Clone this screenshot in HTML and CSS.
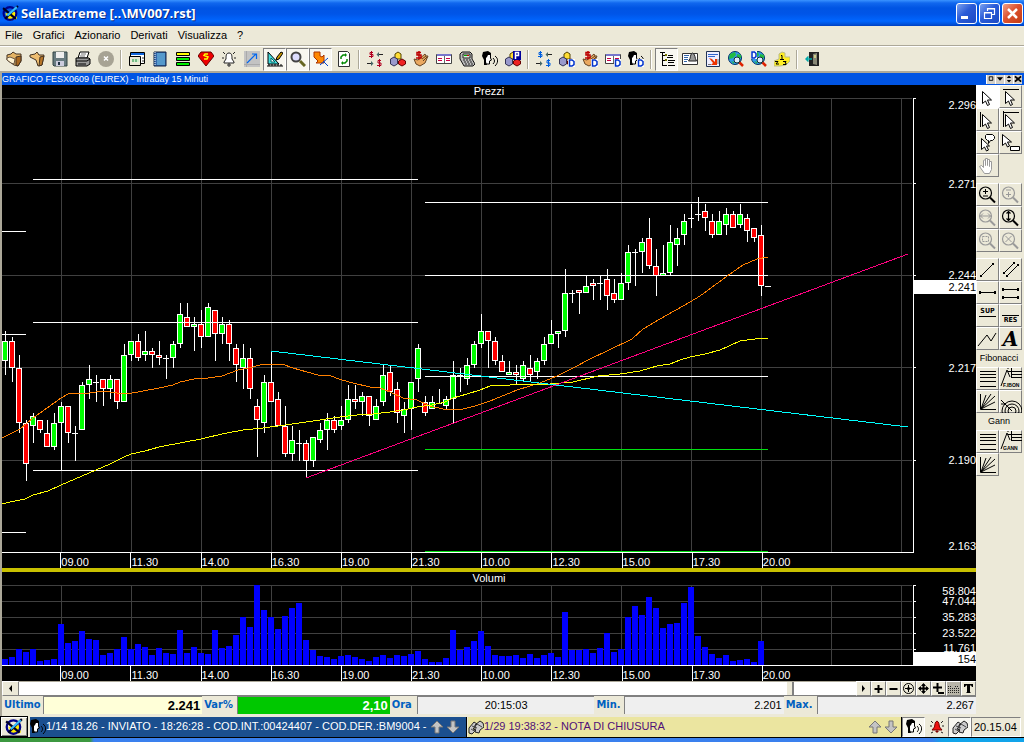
FILE: index.html
```html
<!DOCTYPE html>
<html lang="it">
<head>
<meta charset="utf-8">
<title>SellaExtreme</title>
<link rel="stylesheet" href="styles.css">
</head>
<body>
<svg class="sprite" aria-hidden="true">
  <symbol id="logo" viewBox="0 0 16 16"><path d="M3 8l4 7 7-2V6z" fill="#fe0"/><circle cx="7.500" cy="8" r="6" fill="none" stroke="#008" stroke-width="2"/><path d="M1 3l12 10M3 13L15 1" stroke="#002" stroke-width="2"/><path d="M5 10l9-8" stroke="#3bf" stroke-width="2"/></symbol>
  <symbol id="box-open" viewBox="0 0 16 16"><path d="M1 4l4-1 2-2 3 2 5 0v7l-3 5-4-1-7-5z" fill="#e3b364" stroke="#432"/><path d="M10 6l5-1v5l-3 5-2-1z" fill="#a86820" stroke="#432"/><path d="M1 7l3-1 5 2-1 5-3-1-4-3z" fill="#fff3d0" stroke="#654"/></symbol>
  <symbol id="box" viewBox="0 0 16 16"><path d="M1 4l5-1 2-2 2 3 5 0-2 10-4 1-2-6-6-3z" fill="#edbd70" stroke="#432"/><path d="M11 6l4-1-2 9-3 1z" fill="#b87628" stroke="#432"/></symbol>
  <symbol id="disk" viewBox="0 0 16 16"><path d="M1 1h14v14H2l-1-1z" fill="#687b80" stroke="#344"/><path d="M4 1h8v6H4z" fill="#eee"/><path d="M4 10h8v5H4z" fill="#ccd"/><path d="M6 11h2v3H6z" fill="#234"/></symbol>
  <symbol id="printer" viewBox="0 0 16 16"><path d="M5 1h9l-2 6H3z" fill="#fff" stroke="#000"/><path d="M6 3h5M5 5h5" stroke="#777"/><path d="M1 7h13l1 1v5l-3 2H1z" fill="#999" stroke="#000"/><path d="M1 10h11l3-2M3 13h8" stroke="#000" fill="none"/></symbol>
  <symbol id="stop" viewBox="0 0 16 16"><circle cx="8" cy="8" r="8" fill="#a7a394"/><path d="M6 5.500l4 4M10 5.500l-4 4" stroke="#fff" stroke-width="1.500"/></symbol>
  <symbol id="window" viewBox="0 0 16 16"><path d="M1.500 1.500h14v11h-14z" fill="#fff" stroke="#000"/><path d="M2 2h13v2H2z" fill="#16d"/><path d="M.5 5.500h11v9H.5z" fill="#ece9d8" stroke="#000"/><path d="M3 8h7v3H3z" fill="#cec"/><path d="M4 8v3M7 8v3" stroke="#284"/><path d="M13 7h2M13 10h2" stroke="#333"/></symbol>
  <symbol id="book" viewBox="0 0 16 16"><path d="M2 1h12v14H2z" fill="#36a" stroke="#124"/><path d="M5 2h8v12H5z" fill="#59c"/><path d="M3 1v14" stroke="#fff" stroke-dasharray="1 1"/></symbol>
  <symbol id="bars" viewBox="0 0 16 16"><path d="M1.500 1.500h13v3h-13z" fill="#ff0" stroke="#000"/><path d="M1.500 6.500h13v3h-13zM1.500 11.500h13v3h-13z" fill="#0e0" stroke="#000"/></symbol>
  <symbol id="gem" viewBox="0 0 16 16"><path d="M3 1h10l3 4-8 10L0 5z" fill="#e00" stroke="#600"/><path d="M10 3H7L6 4.500 10 6 9 8H6" fill="none" stroke="#ff0" stroke-width="1.500"/></symbol>
  <symbol id="bell" viewBox="0 0 16 16"><path d="M8 2c-3 0-3 3-3 6l-2 3v1h10v-1l-2-3c0-3 0-6-3-6zM7 13h2v2H7z" fill="#fff" stroke="#222"/><path d="M2 1l2 2M14 1l-2 2M1 7h2M13 7h2" stroke="#222"/></symbol>
  <symbol id="trend" viewBox="0 0 16 16"><path d="M0 0h16v16H0z" fill="#c3c3c3"/><path d="M2.500 0v16M0 13.500h16" stroke="#aaa"/><path d="M3 12l9-9M8 3h4.500v5" fill="none" stroke="#06e" stroke-width="1.200"/></symbol>
  <symbol id="square" viewBox="0 0 16 16"><path d="M1 1v12h11z" fill="#4dd" stroke="#000"/><path d="M4 7v4h4z" fill="#fff" stroke="#066"/><path d="M9 9l1-3 4-5 2 1-4 6z" fill="#c90" stroke="#000"/><path d="M0 15h16M2 13v2M5 13v2M8 13v2M11 13v2M14 13v2" stroke="#000"/></symbol>
  <symbol id="lens" viewBox="0 0 16 16"><circle cx="6" cy="6" r="4.500" fill="#ddf" stroke="#444" stroke-width="2"/><path d="M10 10l5 5" stroke="#662" stroke-width="3"/></symbol>
  <symbol id="pin-arrow" viewBox="0 0 16 16"><path d="M1 1h6v4l2 1 2-2v8H3l2-2-4-4z" fill="#f80" stroke="#a30"/><path d="M7 14l8-7M10 10l5 5" stroke="#04c"/></symbol>
  <symbol id="refresh" viewBox="0 0 16 16"><path d="M2.500.5h9l2 2v13h-11z" fill="#fff" stroke="#333"/><path d="M5 8V6l2-2h2M11 8v2l-2 2H7" fill="none" stroke="#080" stroke-width="1.500"/><path d="M9 2l2 2-2 2zM7 10l-2 2 2 2z" fill="#080"/></symbol>
  <symbol id="dollars" viewBox="0 0 16 16"><path d="M6 1.500H3v2h3v2H2M4.500 0v7M14 9.500h-3v2.500h3v2.500h-4M12.500 8v8" fill="none" stroke="currentColor"/><path d="M16 3.500h-5M0 12.500h5" stroke="#222"/><path d="M12 1v5L9.500 3.500zM4 10v5l2.500-2.500z" fill="#466"/></symbol>
  <symbol id="blocks" viewBox="0 0 16 16"><path d="M5 3l3-2 3 2v5H5z" fill="#fd3" stroke="#540"/><path d="M.5 8L4 6l3.500 2v5L4 15l-3.500-2z" fill="#99c" stroke="#335"/><path d="M8.500 10L12 8l3.500 2v3L12 15l-3.500-2z" fill="#e22" stroke="#600"/></symbol>
  <symbol id="hand-money" viewBox="0 0 16 16"><path d="M1 8l4 1 7-6 1 2 2 0-3 7-5 3-4-2z" fill="#eaa961" stroke="#642"/><path d="M9 8l4-3M10 10l4-4" stroke="#642"/><path d="M8 1.500H4v2.500h4V7H3M6 0v8.500" fill="none" stroke="#b00" stroke-width="1.500"/></symbol>
  <symbol id="ticket" viewBox="0 0 16 16"><path d="M.5 3.500h15v9H.5z" fill="#fff" stroke="#444"/><path d="M1 3h14v2H1z" fill="#77c"/><path d="M8.500 5v7" stroke="#666"/><path d="M2 7.500h4M2 9.500h4M10 7.500h4M10 9.500h4" stroke="#c04"/></symbol>
  <symbol id="calc" viewBox="0 0 16 16"><path d="M3 1h8l2 2 0 5 3 5-2 2H5L1 8V3z" fill="#bbb" stroke="#111"/><path d="M4 3h7v4H4z" fill="#ded" stroke="#222"/><path d="M5 4.500h3" stroke="#0a0"/><path d="M8 4.500h2" stroke="#c00"/><path d="M4 9h8M5 11h8M6 13h8" stroke="#222" stroke-dasharray="2 1"/></symbol>
  <symbol id="voice" viewBox="0 0 16 16"><path d="M4 3l3 0 2 3-1 2 1 1-2 1v3H3l1-4z" fill="#fff"/><path d="M1 1l5-1 3 2v2H6L5 6 4 7v4l1 3H2V9L0 5z"/><path d="M8.500 4v3l1 2-2 1v3H4" fill="none" stroke="#000"/><path d="M11 7c2 2 2 4 0 6M13 5c4 3 3 7 0 10" fill="none" stroke="currentColor"/></symbol>
  <symbol id="badge-d" viewBox="0 0 16 16"><path d="M9 8h7v8H9z" fill="#fff"/><path d="M10.500 9h2.500l2 1.500v3L13 15h-2.500z" fill="none" stroke="#03c" stroke-width="1.500"/></symbol>
  <symbol id="badge-p" viewBox="0 0 16 16"><path d="M8 0h8v9H8z" fill="#009"/><path d="M10.500 8V1.500h3v3h-3" fill="none" stroke="#fff" stroke-width="1.500"/></symbol>
  <symbol id="tree" viewBox="0 0 16 16"><path d="M1 1.500h5M3.500 2v13M4 4.500h4M4 9.500h4M4 14.500h4M9 4.500h5M9 9.500h7M9 14.500h7M8 6.500h6M9 11.500h6" fill="none" stroke="#000"/><path d="M6 3h2v2H6zM6 8h2v2H6z" fill="#770"/></symbol>
  <symbol id="doc-bell" viewBox="0 0 16 16"><path d="M.5 2.500h15v11H.5z" fill="#fff" stroke="#333"/><path d="M2 4.500h5M2 6.500h4M2 8.500h4M2 10.500h3" stroke="#36a"/><path d="M10.500 2c-3 1-1 5-4 8h8c-2-3-1-7-4-8z" fill="#999" stroke="#222"/></symbol>
  <symbol id="report" viewBox="0 0 16 16"><path d="M1.500.5h13v15h-13z" fill="#eef" stroke="#235"/><path d="M3 3.500h10M3 5.500h7" stroke="#36c"/><path d="M4 7l3 1 3 3v-3h2v6H6l2-2z" fill="#e30"/><path d="M3 13.500h3M13 8v5" stroke="#777"/></symbol>
  <symbol id="globe" viewBox="0 0 16 16"><circle cx="7" cy="7" r="6.500" fill="#39e" stroke="#036"/><path d="M2 3l5-2 1 3-3 3-4 1zM9 3l4 1v3H9zM3 10l3 1v2z" fill="#2b4"/><circle cx="9" cy="9" r="3" fill="#def" stroke="#133"/><path d="M11.500 11.500l3.500 3.500" stroke="#d20" stroke-width="2.500"/></symbol>
  <symbol id="podium" viewBox="0 0 16 16"><path d="M5 3l3-2 3 1v4h5v4l-4 4-6 1H0v-5l5-2z" fill="#fe2" stroke="#bb8"/><path d="M7 4.500h1V8M6 8.500h4M1 10.500h3L2 13h3M9 10.500h3l-1 1.500h1v1.500H9" fill="none" stroke="#000"/></symbol>
  <symbol id="exit" viewBox="0 0 16 16"><path d="M4 1h10v14H4z" fill="#222"/><path d="M8 3l4-1v12l-4-1z" fill="#887"/><path d="M9 4h2v3H9z" fill="#cc8"/><path d="M7 8H1M3.500 5.500L1 8l2.500 2.500" fill="none" stroke="#0aa" stroke-width="1.500"/></symbol>
  <symbol id="phone" viewBox="0 0 16 16"><path d="M1 9l5-6 3 2-4 5 3 1-4 4-3-1zM7 6l5-4 3 2 1 4-4 3-1 3-4-1z" fill="#ccc" stroke="#222"/><path d="M4 7l5 2M3 10l5 3M9 5l5 3" stroke="#444"/></symbol>
  <symbol id="bell-red" viewBox="0 0 16 16"><path d="M8 2C6 3 6 5 5.500 8L3 11h10l-2.500-3C10 5 10 3 8 2zM7 12h2v1H7z" fill="#e11" stroke="#700"/><path d="M2 2l2 2M14 2l-2 2M1 7h2M13 7h2M2 14l2-1M14 14l-2-1" stroke="#222"/></symbol>
  <symbol id="up" viewBox="0 0 14 14"><path d="M7 1l6 6H9v6H5V7H1z" fill="#c4c4c4" stroke="#777"/></symbol>
  <symbol id="down" viewBox="0 0 14 14"><path d="M7 13l6-6H9V1H5v6H1z" fill="#c4c4c4" stroke="#777"/></symbol>
  <symbol id="cursor" viewBox="0 0 22 22"><path d="M5.500 5.500v12l3-2.500 2 4.500 2-1-2-4.500h4z" fill="#fff" stroke="#000"/></symbol>
  <symbol id="mag" viewBox="0 0 22 22"><circle cx="8.500" cy="9" r="6" fill="none" stroke="currentColor" stroke-width="1.200"/><path d="M13 13.500l5 5" stroke="currentColor" stroke-width="2"/></symbol>
  <symbol id="levels" viewBox="0 0 22 22"><path d="M3 3.500h16M3 6.500h16M3 9.500h16M3 13.500h16M3 18.500h16" stroke="#000"/></symbol>
  <symbol id="ext" viewBox="0 0 22 22"><path d="M1 18L7 2l3 7M11.500 0v9M8 3.500h14M11 6.500h11M11 9.500h11M7 0h2" fill="none" stroke="#000"/></symbol>
  <symbol id="fan" viewBox="0 0 22 22"><path d="M3.500 3v15.500H19M4 18L9 4M4 18L14 3M4 18L18 5M4 18l14-7" fill="none" stroke="#000"/></symbol>
</svg>

<header class="titlebar">
  <svg class="ico"><use href="#logo"/></svg>
  <h1 class="title">SellaExtreme [..\MV007.rst]</h1>
  <button class="win" aria-label="Riduci"><svg viewBox="0 0 19 19"><path d="M4 12h7v3H4z" fill="#fff"/></svg></button>
  <button class="win" aria-label="Ripristina"><svg viewBox="0 0 19 19"><path d="M7.500 7V4.500h7v6H12M7 5h8M4.500 8.500h7v6h-7zM4 9h8" fill="none" stroke="#fff" stroke-width="1.200"/></svg></button>
  <button class="win close" aria-label="Chiudi"><svg viewBox="0 0 19 19"><path d="M5 5l9 9M14 5l-9 9" stroke="#fff" stroke-width="2.500"/></svg></button>
</header>

<nav class="menu">
  <button>File</button><button>Grafici</button><button>Azionario</button><button>Derivati</button><button>Visualizza</button><button>?</button>
</nav>

<div class="toolbar" role="toolbar">
  <button aria-label="Apri pagina"><svg><use href="#box-open"/></svg></button>
  <button aria-label="Apri"><svg><use href="#box"/></svg></button>
  <button aria-label="Salva"><svg><use href="#disk"/></svg></button>
  <button aria-label="Stampa"><svg><use href="#printer"/></svg></button>
  <button aria-label="Annulla"><svg><use href="#stop"/></svg></button>
  <span class="sep"></span>
  <button aria-label="Finestre"><svg><use href="#window"/></svg></button>
  <button aria-label="Rubrica"><svg><use href="#book"/></svg></button>
  <button aria-label="Liste"><svg><use href="#bars"/></svg></button>
  <button aria-label="Super"><svg><use href="#gem"/></svg></button>
  <button aria-label="Allarmi"><svg><use href="#bell"/></svg></button>
  <button aria-label="Grafico"><svg><use href="#trend"/></svg></button>
  <button class="on" aria-label="Disegno"><svg><use href="#square"/></svg></button>
  <button class="on" aria-label="Zoom"><svg><use href="#lens"/></svg></button>
  <button class="on" aria-label="Puntatore"><svg><use href="#pin-arrow"/></svg></button>
  <button aria-label="Aggiorna"><svg><use href="#refresh"/></svg></button>
  <span class="sep"></span>
  <button class="red" aria-label="Compra vendi"><svg><use href="#dollars"/></svg></button>
  <button aria-label="Portafoglio"><svg><use href="#blocks"/></svg></button>
  <button aria-label="Liquidità"><svg><use href="#hand-money"/></svg></button>
  <button aria-label="Ordini"><svg><use href="#ticket"/></svg></button>
  <button aria-label="Calcolatrice"><svg><use href="#calc"/></svg></button>
  <button aria-label="Messaggi"><svg><use href="#voice"/></svg></button>
  <button aria-label="Posizioni"><svg><use href="#blocks"/><use href="#badge-p"/></svg></button>
  <span class="sep"></span>
  <button class="blue" aria-label="Compra vendi derivati"><svg><use href="#dollars"/></svg></button>
  <button aria-label="Portafoglio derivati"><svg><use href="#blocks"/><use href="#badge-d"/></svg></button>
  <button aria-label="Liquidità derivati"><svg><use href="#hand-money"/><use href="#badge-d"/></svg></button>
  <button aria-label="Ordini derivati"><svg><use href="#ticket"/><use href="#badge-d"/></svg></button>
  <button aria-label="Messaggi derivati"><svg><use href="#voice"/><use href="#badge-d"/></svg></button>
  <span class="sep"></span>
  <button class="on" aria-label="Albero"><svg><use href="#tree"/></svg></button>
  <button aria-label="Avvisi"><svg><use href="#doc-bell"/></svg></button>
  <button aria-label="Report"><svg><use href="#report"/></svg></button>
  <button aria-label="Cerca"><svg><use href="#globe"/></svg></button>
  <button aria-label="Cerca derivati"><svg><use href="#globe"/><path d="M0 0h6v8H0z" fill="#fff"/><path d="M1 1h2.500L5 2.500v3L3.500 7H1z" fill="none" stroke="#03c" stroke-width="1.500"/></svg></button>
  <button aria-label="Classifiche"><svg><use href="#podium"/></svg></button>
  <span class="sep"></span>
  <button aria-label="Esci"><svg><use href="#exit"/></svg></button>
</div>

<div class="mdi">
  <div class="caption">
    <h2 class="caption-text">GRAFICO FESX0609 (EUREX) - Intraday 15 Minuti</h2>
    <button aria-label="Finestra"><svg viewBox="0 0 9 8"><path d="M2.500 1.500h4v4h-4z" fill="none" stroke="#000"/></svg></button>
    <button aria-label="Menu"><svg viewBox="0 0 9 8"><path d="M1 2h7L4.500 6z"/></svg></button>
    <button aria-label="Dimensione"><svg viewBox="0 0 9 8"><path d="M2 3l2.500-3L7 3zM2 5l2.500 3L7 5z"/></svg></button>
    <button aria-label="Chiudi grafico"><svg viewBox="0 0 9 8"><path d="M1 1l7 6M8 1L1 7" stroke="#000" stroke-width="2"/></svg></button>
  </div>

  <div class="work">
    <main class="charts">
      <section class="pane price">
        <h3 class="pane-title">Prezzi</h3>
        <svg class="plot" id="price-plot" viewBox="2 98 912 455" preserveAspectRatio="none"></svg>
        <div class="scale" id="price-scale"></div>
        <div class="times"></div>
      </section>
      <section class="pane volume">
        <h3 class="pane-title">Volumi</h3>
        <svg class="plot" id="volume-plot" viewBox="2 585 912 81" preserveAspectRatio="none"></svg>
        <div class="scale" id="volume-scale"></div>
        <div class="times"></div>
      </section>
      <div class="scroll">
        <button aria-label="Indietro"><svg viewBox="0 0 11 11"><path d="M7 2v7L4 5.500z"/></svg></button>
        <div class="track"><span class="thumb"></span></div>
        <button aria-label="Avanti"><svg viewBox="0 0 11 11"><path d="M4 2v7l3-3.500z"/></svg></button>
        <button aria-label="Ingrandisci"><svg viewBox="0 0 11 11"><path d="M5.500 2v8M1.500 6h8" stroke="#000" stroke-width="2"/></svg></button>
        <button aria-label="Riduci scala"><svg viewBox="0 0 11 11"><path d="M1.500 6h8" stroke="#000" stroke-width="2"/></svg></button>
        <button aria-label="Centra"><svg viewBox="0 0 11 11"><circle cx="5.500" cy="5.500" r="5" fill="none" stroke="#000"/><path d="M5.500 2v7M2 5.500h7" stroke="#000"/><circle cx="5.500" cy="5.500" r="1.500"/></svg></button>
        <button aria-label="Sposta"><svg viewBox="0 0 11 11"><path d="M5.500 1v9M1 5.500h9" stroke="#000" stroke-width="2"/><path d="M5.500 0L8 3H3zM5.500 11L8 8H3zM0 5.500L3 3v5zM11 5.500L8 3v5z"/></svg></button>
        <button class="on" aria-label="Scala"><svg viewBox="0 0 11 11"><path d="M4.500 0v9M0 4.500h9" stroke="#000" stroke-width="2"/><path d="M5 10h6" stroke="#000" stroke-width="2"/></svg></button>
        <button class="grey" aria-label="Griglia"><svg viewBox="0 0 11 11"><path d="M0 5.500h11M0 7.500h11M0 9.500h11M0 3.500h4M7 3.500h4" stroke="#222" stroke-dasharray="1 1"/></svg></button>
        <button aria-label="Testo"><svg viewBox="0 0 11 11"><path d="M1 1h9v3H9L8 2.500H7V9l1 1H3l1-1V2.500H3L2 4H1z"/></svg></button>
      </div>
      <dl class="quote">
        <dt class="w41">Ultimo</dt><dd class="last">2.241</dd>
        <dt class="w35">Var%</dt><dd class="var">2,10</dd>
        <dt class="w27">Ora</dt><dd class="time">20:15:03</dd>
        <dt class="w30">Min.</dt><dd>2.201</dd>
        <dt class="w33">Max.</dt><dd>2.267</dd>
      </dl>
    </main>

    <aside class="palette">
      <div class="group">
        <button class="on" aria-label="Selezione"><svg><use href="#cursor"/></svg></button>
        <button aria-label="Cursore orizzontale"><svg><use href="#cursor"/><path d="M3 3.500h16" stroke="#000"/></svg></button>
        <button aria-label="Cursore verticale"><svg><use href="#cursor"/><path d="M3.500 3v15" stroke="#000"/></svg></button>
        <button aria-label="Cursore a croce"><svg><use href="#cursor"/><path d="M3 3.500h16M3.500 2v16" stroke="#000"/></svg></button>
        <button aria-label="Commento"><svg><path d="M9.500 2.500h6l2 2v2l-2 2h-2l-2 3v-3h-1l-2-2v-3z" fill="#fff" stroke="#000"/><path d="M4.500 6.500v11l3-2.500 2 4 2-1-2-4h3z" fill="#fff" stroke="#000"/></svg></button>
        <button aria-label="Etichetta"><svg viewBox="0 0 22 22"><path d="M2.500 2.500v11l3-2.500 2 4 2-1-2-4h4z" fill="#fff" stroke="#000"/><path d="M10.500 14.500h9v4h-9z" fill="#fff" stroke="#000"/></svg></button>
        <button aria-label="Mano"><svg viewBox="0 0 22 22"><path d="M7.500 18.500l-5-7 2-1 2 2V5.500l2-1v6-7h2v7-6h2v7l0-5h2v8l-2 4z" fill="#fff" stroke="#999"/></svg></button>
      </div>
      <div class="group">
        <button aria-label="Zoom"><svg><use href="#mag"/><path d="M6 7.500h5M8.500 5v5M6 12h5" stroke="#000"/></svg></button>
        <button class="off" aria-label="Zoom indietro"><svg><use href="#mag"/><path d="M6 6h5M6 10.500h5M8.500 8v5" stroke="#999"/></svg></button>
        <button class="off" aria-label="Zoom orizzontale"><svg><use href="#mag"/><path d="M3 9h11M6 6.500L3.500 9 6 11.500M11 6.500L13.500 9 11 11.500" fill="none" stroke="#999"/></svg></button>
        <button aria-label="Zoom verticale"><svg><use href="#mag"/><path d="M8.500 4v10M6.500 6.500l2-2 2 2M6.500 11.500l2 2 2-2" fill="none" stroke="#000" stroke-width="1.200"/></svg></button>
        <button class="off" aria-label="Zoom area"><svg><use href="#mag"/><path d="M5.500 6.500h6v5h-6z" fill="none" stroke="#999" stroke-dasharray="2 1"/></svg></button>
        <button class="off" aria-label="Zoom tutto"><svg><use href="#mag"/><path d="M5.500 6l6 6M11.500 6l-6 6" stroke="#999"/></svg></button>
      </div>
      <div class="group tight">
        <button aria-label="Linea"><svg><path d="M4 17L16 5" stroke="#000"/><path d="M3 16h2v2H3zM15 4h2v2h-2z"/></svg></button>
        <button aria-label="Canale"><svg><path d="M4 14L14 4M7 17L18 6" stroke="#000"/><path d="M3 13h2v2H3zM13 3h2v2h-2zM6 16h2v2H6zM17 5h2v2h-2z"/></svg></button>
        <button aria-label="Orizzontale"><svg><path d="M2 10.500h17" stroke="#000"/><path d="M2 9h2v3H2zM17 9h2v3h-2z"/></svg></button>
        <button aria-label="Parallele"><svg><path d="M2 7.500h17M2 15.500h17" stroke="#000"/><path d="M2 6h2v3H2zM17 6h2v3h-2zM2 14h2v3H2zM17 14h2v3h-2z"/></svg></button>
        <button class="mini" aria-label="Supporto"><span class="over">SUP</span></button>
        <button class="mini" aria-label="Resistenza"><span class="under">RES</span></button>
        <button aria-label="Spezzata"><svg><path d="M1 18l9-11 4 6 5-8" fill="none" stroke="#000"/></svg></button>
        <button class="big-a" aria-label="Testo">A</button>
      </div>
      <h4>Fibonacci</h4>
      <div class="group tight">
        <button aria-label="Livelli Fibonacci"><svg><use href="#levels"/></svg></button>
        <button class="cap" aria-label="Estensioni Fibonacci"><svg><use href="#ext"/></svg><span>F.IBON</span></button>
        <button aria-label="Ventaglio Fibonacci"><svg><use href="#fan"/></svg></button>
        <button aria-label="Archi Fibonacci"><svg><g fill="none" stroke="#000"><circle cx="12" cy="20" r="10"/><circle cx="12" cy="20" r="7"/><circle cx="12" cy="20" r="4"/><path d="M1 9l11 11M1 13h3"/></g></svg></button>
      </div>
      <h4>Gann</h4>
      <div class="group tight">
        <button aria-label="Livelli Gann"><svg><use href="#levels"/></svg></button>
        <button class="cap" aria-label="Estensioni Gann"><svg><use href="#ext"/></svg><span>GANN</span></button>
        <button aria-label="Ventaglio Gann"><svg><use href="#fan"/></svg></button>
      </div>
    </aside>
  </div>
</div>

<footer class="status">
  <button class="start" aria-label="SellaExtreme"><svg><use href="#logo"/></svg></button>
  <div class="msg order"><svg><use href="#voice"/></svg><span class="msg-text">1/14 18.26 - INVIATO - 18:26:28 - COD.INT.:00424407 - COD.DER.:BM9004 -</span><svg class="arrow"><use href="#up"/></svg><svg class="arrow"><use href="#down"/></svg></div>
  <div class="msg note"><svg><use href="#phone"/></svg><span class="msg-text">1/29 19:38:32 - NOTA DI CHIUSURA</span><svg class="arrow"><use href="#up"/></svg><svg class="arrow"><use href="#down"/></svg></div>
  <button class="tray on" aria-label="Messaggi"><svg><use href="#voice"/></svg></button>
  <button class="tray" aria-label="Allarmi"><svg><use href="#bell-red"/></svg></button>
  <button class="tray on" aria-label="Telefono"><svg><use href="#phone"/></svg></button>
  <time class="clock">20.15.04</time>
</footer>
<div class="taskbar"></div>
<script src="chart.js"></script>
</body>
</html>
```

FILE: styles.css
```css
* { box-sizing: border-box; }
html, body { height: 100%; margin: 0; }
body {
  display: flex;
  flex-direction: column;
  overflow: hidden;
  background: #ece9d8;
  color: #000;
  font: 11px/13px "Liberation Sans", Arial, sans-serif;
}
h1, h2, h3, h4, dl, dd { margin: 0; font-weight: normal; }
button { margin: 0; padding: 0; border: 0; background: none; color: inherit; font: inherit; }
svg { display: block; flex: none; }
.sprite { position: absolute; width: 0; height: 0; }

.titlebar {
  flex: none;
  display: flex;
  align-items: center;
  gap: 2px;
  height: 26px;
  padding: 0 1px 0 2px;
  background: linear-gradient(#3a93ff 0, #1167ee 3px, #0054e3 8px, #0055e8 14px, #0066ff 21px, #0053dd 24px, #003fc0 26px);
}
.titlebar .ico { width: 17px; height: 17px; }
.title {
  flex: 1;
  color: #fff;
  font: bold 13px/20px "Open Sans", "Noto Sans", sans-serif;
  text-shadow: 1px 1px #0a2a80;
}
.win {
  width: 21px;
  height: 21px;
  border: 1px solid #fff;
  border-radius: 3px;
  background: linear-gradient(135deg, #7ba2f0, #2a5bd7 45%, #1c4ac4);
}
.win.close { background: linear-gradient(135deg, #f0a088, #dd5230 45%, #c33c14); }
.win svg { width: 19px; height: 19px; }

.menu {
  flex: none;
  display: flex;
  gap: 10px;
  height: 20px;
  padding: 0 5px;
  border-bottom: 1px solid #aca899;
}

.toolbar {
  flex: none;
  display: flex;
  align-items: center;
  height: 27px;
  padding: 0 2px;
  border-top: 1px solid #fff;
  border-bottom: 2px solid #aca899;
}
.toolbar button { display: grid; place-items: center; width: 23px; height: 23px; }
.toolbar svg { width: 16px; height: 16px; }
.toolbar .red { color: #b00020; }
.toolbar .blue { color: #0060e0; }
.sep { width: 2px; height: 19px; margin: 0 3px; border-left: 1px solid #aca899; border-right: 1px solid #fff; }
.on { background: #f8f7f0; border: 1px solid; border-color: #808080 #fff #fff #808080; }

.mdi { flex: 1; min-height: 0; display: flex; flex-direction: column; padding-left: 2px; background: linear-gradient(90deg, #aca899 2px, #ece9d8 2px); }
.caption { flex: none; display: flex; align-items: center; height: 12px; padding-right: 2px; background: #0054e3; color: #fff; }
.caption-text { flex: 1; font-size: 9px; line-height: 12px; }
.caption button { width: 9px; height: 9px; background: #d4d0c8; border-left: 1px solid #fff; }
.caption svg { width: 8px; height: 8px; }

.work { flex: 1; min-height: 0; display: flex; }
.charts { flex: 1; min-width: 0; display: flex; flex-direction: column; }
.pane {
  display: grid;
  grid-template: 13px minmax(0, 1fr) 15px / minmax(0, 1fr) 62px;
  min-height: 0;
  overflow: hidden;
  background: #000;
  color: #fff;
}
.price { flex: 483; border-bottom: 4px solid #c8c000; flex-basis: 4px; }
.volume { flex: 109; flex-basis: 0; }
.pane-title { grid-column: 1 / 3; font-size: 11px; text-align: center; }
.plot { width: 100%; height: 100%; shape-rendering: crispEdges; }
.scale { position: relative; grid-row: 2 / 4; grid-column: 2; margin-bottom: 15px; }
.scale .tick { position: absolute; left: 0; width: 2px; height: 1px; background: #fff; }
.scale .val { position: absolute; right: 0; line-height: 10px; margin-top: -5px; }
.scale .now { left: 0; line-height: 14px; margin-top: -7px; text-align: right; background: #fff; color: #000; }
.times { grid-row: 3; grid-column: 1 / 3; display: flex; padding-right: 62px; white-space: nowrap; }
.times span { flex: 70 1 0; min-width: 0; border-left: 1px solid #fff; line-height: 18px; height: 15px; }
.times .first { flex-grow: 59; border: 0; }
.times .rest { flex-grow: 83; border: 0; }

.grid { fill: none; stroke: #404040; }
.frame { fill: none; stroke: #fff; }
.level { fill: none; stroke: #fff; }
.target { fill: none; stroke: #00e010; }
.wick { fill: #fff; }
.up-body { fill: #0f0; }
.down-body { fill: #f00; }
.bar { fill: #00f; }
.avg-fast { fill: none; stroke: #ff8000; }
.avg-slow { fill: none; stroke: #ff0; }
.trend-down { fill: none; stroke: #0ff; }
.trend-up { fill: none; stroke: #ff0080; }

.scroll { flex: none; display: flex; height: 15px; }
.scroll button {
  display: grid;
  place-items: center;
  width: 15px;
  background: #ece9d8;
  border: 1px solid;
  border-color: #fff #808080 #808080 #fff;
}
.scroll button:first-child { width: 17px; }
.scroll svg { width: 11px; height: 11px; }
.scroll .grey { background: #b8b5a8; }
.track { flex: 1; display: flex; justify-content: flex-end; padding-right: 62px; background: #fff; border-top: 1px solid #aca899; border-bottom: 1px solid #808080; }
.thumb { width: 7px; background: #ece9d8; border-right: 2px solid #808080; }

.quote { flex: none; display: flex; height: 20px; padding-bottom: 2px; line-height: 18px; }
.quote dt { flex: none; padding-left: 2px; color: #0060c0; font: bold 11px/18px "DejaVu Sans Condensed", "DejaVu Sans", sans-serif; white-space: nowrap; }
.w41 { width: 41px; }
.w35 { width: 35px; }
.w27 { width: 27px; }
.w30 { width: 30px; }
.w33 { width: 33px; }
.quote dd { flex: 159 1 0; min-width: 0; padding: 0 2px; border-left: 1px solid #808080; border-top: 1px solid #808080; background: #efefef; text-align: right; line-height: 17px; }
.quote .last { background: #ffffd8; font-size: 13px; font-weight: bold; }
.quote .var { flex-grow: 152; background: #00c800; color: #fff; font-size: 13px; font-weight: bold; }
.quote .time { flex-grow: 178; text-align: center; }

.palette { flex: none; width: 48px; padding-right: 2px; }
.group { display: grid; grid-template-columns: 23px 23px; margin-bottom: 6px; }
.group.tight { margin-bottom: 0; }
.palette button {
  position: relative;
  width: 23px;
  height: 23px;
  border: 1px solid;
  border-color: #fff #808080 #808080 #fff;
}
.palette svg { width: 22px; height: 22px; overflow: hidden; }
.palette button.on { background: #fff; border-color: #fff; }
.off { color: #999; }
.palette h4 { text-align: center; font-size: 9px; line-height: 17px; }
.mini { font: bold 7px/9px "DejaVu Sans Condensed", sans-serif; }
.palette .mini { font: bold 7px/9px "DejaVu Sans Condensed", sans-serif; }
.mini span { display: block; margin: 0 2px; }
.mini .over { border-bottom: 1px solid #000; margin-bottom: 8px; }
.mini .under { border-top: 1px solid #000; margin-top: 8px; }
.palette .big-a { font: italic 900 20px/20px "DejaVu Serif", serif; }
.cap span { position: absolute; left: 3px; bottom: 0; font: bold 5px/7px "Liberation Sans", sans-serif; background: #ece9d8; }

.status { flex: none; display: flex; align-items: center; height: 22px; border-bottom: 1px solid #000; }
.start { display: grid; place-items: center; width: 28px; height: 21px; border: 1px solid #000; box-shadow: inset 1px 1px #fff, inset -1px -1px #808080; }
.start svg { width: 18px; height: 18px; }
.msg { flex: 436 1 0; display: flex; align-items: center; height: 20px; white-space: nowrap; min-width: 0; }
.msg svg { width: 16px; height: 16px; }
.msg .arrow { width: 16px; height: 14px; }
.msg-text { flex: 1; overflow: hidden; }
.order { margin: 0 1px 0 2px; padding-right: 5px; background: #1b4f8f; color: #fff; border-right: 1px solid #000; }
.order svg:first-child { color: #000; }
.note { padding-right: 2px; background: #ebe5a0; color: #501078; border-right: 1px solid #000; }
.tray { display: grid; place-items: center; width: 23px; height: 20px; }
.tray svg { width: 16px; height: 16px; }
.clock { width: 50px; margin-right: 3px; padding: 1px 2px; border: 1px solid; border-color: #808080 #fff #fff #808080; line-height: 16px; }
.taskbar { flex: none; height: 4px; background: linear-gradient(90deg, #3c9840 90px, #3a80ee 94px, #3a80ee 91%, #12a4ea 92%); }
```

FILE: chart.js
```js
// Candles: high, open/close top, open/close bottom, low, direction (1 up, 0 down), one every 7 units.
const candles = [
  [331,341,361,375,1],[337,341,368,382,0],[355,368,423,433,0],[420,423,464,481,0],[413,416,426,443,1],
  [420,420,430,433,0],[420,433,447,447,0],[413,423,447,450,1],[402,406,423,470,1],[406,406,433,443,0],
  [426,433,434,461,1],[382,385,430,430,1],[365,379,385,399,1],[375,382,383,402,1],[379,379,389,406,0],
  [375,379,389,399,1],[379,379,402,409,0],[344,355,402,402,1],[341,341,355,361,1],[334,341,358,361,0],
  [331,351,355,361,1],[348,351,355,368,0],[341,355,358,365,0],[355,358,359,379,1],[341,344,358,368,1],
  [303,314,344,348,1],[303,317,327,327,0],[317,324,327,351,1],[310,324,337,348,0],[303,307,337,337,1],
  [310,310,334,361,0],[317,324,334,344,1],[320,324,344,361,0],[344,348,365,382,0],[344,358,368,389,1],
  [348,358,389,399,0],[399,406,420,457,0],[375,382,423,433,1],[351,382,402,402,0],[392,399,426,426,0],
  [406,426,454,457,0],[426,440,454,461,1],[430,443,444,461,1],[440,443,461,478,0],[437,437,461,467,1],
  [423,430,440,443,1],[413,420,430,450,1],[416,420,430,433,0],[406,420,426,430,1],[385,399,420,423,1],
  [385,399,402,409,0],[392,396,402,416,1],[396,396,416,426,0],[399,406,420,420,1],[364,375,402,406,1],
  [366,372,392,396,0],[382,389,413,423,0],[402,409,416,433,1],[382,382,409,430,1],[344,348,379,392,1],
  [396,402,413,416,0],[396,402,409,409,1],[389,403,404,404,1],[396,399,406,410,1],[361,375,399,423,1],
  [368,375,376,392,1],[358,365,379,385,1],[341,344,365,368,1],[314,331,344,348,1],[331,331,341,368,0],
  [337,341,361,365,0],[355,361,372,372,0],[361,372,375,375,1],[365,372,375,385,0],[361,365,379,381,1],
  [355,368,375,381,0],[358,361,372,379,1],[337,344,361,365,1],[320,334,344,344,1],[331,331,334,348,1],
  [269,293,331,337,1],[290,293,294,303,1],[290,290,293,314,0],[275,286,293,293,1],[279,283,286,300,0],
  [275,283,284,300,1],[269,279,296,310,0],[279,293,300,303,0],[273,283,300,300,1],[245,252,283,290,1],
  [249,252,253,286,1],[238,242,252,273,1],[218,238,266,269,0],[249,266,276,296,0],[245,273,276,276,1],
  [225,242,273,275,1],[228,238,245,266,1],[214,221,235,245,1],[204,218,219,228,1],[197,214,215,221,1],
  [204,211,218,231,0],[214,221,235,238,0],[211,221,235,235,1],[208,214,225,235,1],[211,214,228,228,0],
  [204,214,225,228,1],[214,218,231,242,0],[228,228,238,242,0],[225,235,286,296,0],[286,286,287,287,1]
];

const volumes = [
  6,8,16,13,16,4,5,6,41,22,24,34,26,25,10,12,16,28,16,21,18,10,17,12,11,35,12,18,12,11,
  35,17,19,30,48,38,80,55,48,36,49,57,62,25,15,9,8,6,9,10,8,6,4,8,10,7,10,9,11,14,6,3,3,
  7,35,15,18,24,34,19,10,9,9,10,7,11,7,10,12,8,53,15,15,16,12,17,32,13,16,48,59,50,68,57,
  37,41,42,62,78,29,18,11,7,10,4,5,6,3,24
];

const fast = "2,438 20,429 33,418 61,398 68,394 75,393 89,393 103,391 117,393 126,394 138,392 159,388 173,385 180,382 194,379 208,378 222,376 230,373 238,370 253,367 263,364 282,364 293,368 307,372 318,375 328,375 342,380 353,383 370,387 380,388 390,392 403,398 417,400 430,406 443,409 463,409 475,406 490,401 517,390 540,383 557,376 573,368 590,359 607,351 632,339 643,329 660,319 690,302 700,296 730,274 743,265 757,259 768,257";
const slow = "2,504 10,502 25,499 33,495 48,491 61,485 75,479 89,473 110,464 124,457 131,454 145,451 159,447 180,443 201,439 222,434 243,430 263,428 285,425 313,421 340,417 357,415 373,414 390,412 403,410 417,407 432,405 445,402 453,398 467,394 480,390 490,386 510,385 550,384 573,382 598,376 620,374 640,371 657,366 670,364 680,360 690,357 705,354 720,350 740,341 755,339 768,338";

const columns = Array.from({ length: 13 }, (_, i) => 61 + i * 70);
const hline = (y, a, b) => `M${a} ${y}.5H${b}`;
const box = (cls, x, y, w, h) => `<rect class="${cls}" x="${x}" y="${y}" width="${w}" height="${h}"/>`;
const path = (cls, d) => `<path class="${cls}" d="${d}"/>`;
const line = (cls, pts) => `<polyline class="${cls}" points="${pts}"/>`;

function frame(rows, top, bottom) {
  return path("grid", rows.map(y => hline(y, 2, 912)).join("") +
      columns.map(x => `M${x}.5 ${top}V${bottom}`).join("")) +
    path("frame", `M2 ${bottom}.5H913.5V${top}`);
}

const priceRows = [98, 183, 275, 367, 460];
const volumeRows = [585, 601, 617, 633, 649];

let price = frame(priceRows, 98, 552);
candles.forEach(([high, top, bottom, low, up], i) => {
  const x = 5 + i * 7;
  price += box("wick", x, high, 1, low - high) + box("wick", x - 3, top, 6, bottom - top);
  if (bottom - top > 2) price += box(up ? "up-body" : "down-body", x - 2, top + 1, 4, bottom - top - 2);
});
price += path("level", [179, 322, 470].map(y => hline(y, 33, 418)).join("") +
  [231, 334, 532].map(y => hline(y, 2, 26)).join("") +
  [202, 275, 376].map(y => hline(y, 425, 768)).join(""));
price += path("target", hline(449, 425, 768) + hline(551, 425, 768));
price += line("avg-fast", fast) + line("avg-slow", slow) +
  line("trend-down", "271,351 908,427") + line("trend-up", "306,478 908,254");
document.getElementById("price-plot").innerHTML = price;

let volume = frame(volumeRows, 585, 665);
volumes.forEach((h, i) => { volume += box("bar", 2 + i * 7, 665 - h, 6, h); });
document.getElementById("volume-plot").innerHTML = volume;

function scale(id, rows, values, top, height) {
  const pct = y => ((y - top) / height * 100).toFixed(3) + "%";
  document.getElementById(id).innerHTML =
    rows.map(y => `<i class="tick" style="top:${pct(y)}"></i>`).join("") +
    values.map(([y, text, now]) => `<span class="val${now ? " now" : ""}" style="top:${pct(y)}">${text}</span>`).join("");
}
scale("price-scale", priceRows, [[105, "2.296"], [184, "2.271"], [275, "2.244"], [287, "2.241", true], [368, "2.217"], [460, "2.190"], [546, "2.163"]], 98, 455);
scale("volume-scale", volumeRows, [[591, "58.804"], [601, "47.044"], [617, "35.283"], [633, "23.522"], [648, "11.761"], [659, "154", true]], 585, 81);

const times = ["09.00", "11.30", "14.00", "16.30", "19.00", "21.30", "10.00", "12.30", "15.00", "17.30", "20.00"];
document.querySelectorAll(".times").forEach(el => {
  el.innerHTML = '<span class="first"></span>' + times.map(t => `<span>${t}</span>`).join("") + '<span class="rest"></span>';
});
```
